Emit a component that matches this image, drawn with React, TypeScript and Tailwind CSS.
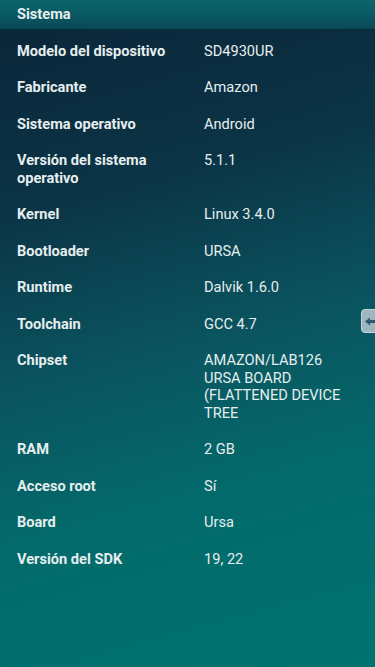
const rows: [string, string[]][] = [
  ['Modelo del dispositivo', ['SD4930UR']],
  ['Fabricante', ['Amazon']],
  ['Sistema operativo', ['Android']],
  ['Versión del sistema operativo', ['5.1.1']],
  ['Kernel', ['Linux 3.4.0']],
  ['Bootloader', ['URSA']],
  ['Runtime', ['Dalvik 1.6.0']],
  ['Toolchain', ['GCC 4.7']],
  ['Chipset', ['AMAZON/LAB126', 'URSA BOARD', '(FLATTENED DEVICE', 'TREE']],
  ['RAM', ['2 GB']],
  ['Acceso root', ['Sí']],
  ['Board', ['Ursa']],
  ['Versión del SDK', ['19, 22']],
];

export default function App() {
  return (
    <div
      className="relative w-[375px] h-[667px] overflow-hidden bg-[linear-gradient(165deg,#0b2438_0%,#0b3446_28%,#0a5560_52%,#036a6b_72%,#00736f_100%)] text-[14.6px] leading-[17.5px] text-[#e6eeee]"
      style={{ fontFamily: 'Roboto, "Liberation Sans", sans-serif' }}
    >
      {/* section header */}
      <div className="h-[31px] flex items-center px-[17px] font-bold bg-[linear-gradient(180deg,#0b6569_0%,#0a5862_55%,#0a4755_100%)] border-b-2 border-[#082c3c]">
        Sistema
      </div>

      <div className="pt-[2px]">
        {rows.map(([label, value]) => (
          <div key={label} className="flex py-[9.5px]">
            <div className="w-[204px] pl-[17px] pr-4 font-bold">{label}</div>
            <div className="flex-1 pr-3">
              {value.map((v) => (
                <div key={v}>{v}</div>
              ))}
            </div>
          </div>
        ))}
      </div>

      {/* side drawer handle */}
      <div className="absolute right-[-8px] top-[309px] w-[22px] h-[24px] rounded-[4px] bg-[#9db6c2] border border-[#c3d6de] flex items-center pl-[3px]">
        <svg width="11" height="9" viewBox="0 0 11 9">
          <path d="M0 4.5 L5 0.5 L5 3 L11 3 L11 6 L5 6 L5 8.5 Z" fill="#2b5b6c" />
        </svg>
      </div>
    </div>
  );
}
